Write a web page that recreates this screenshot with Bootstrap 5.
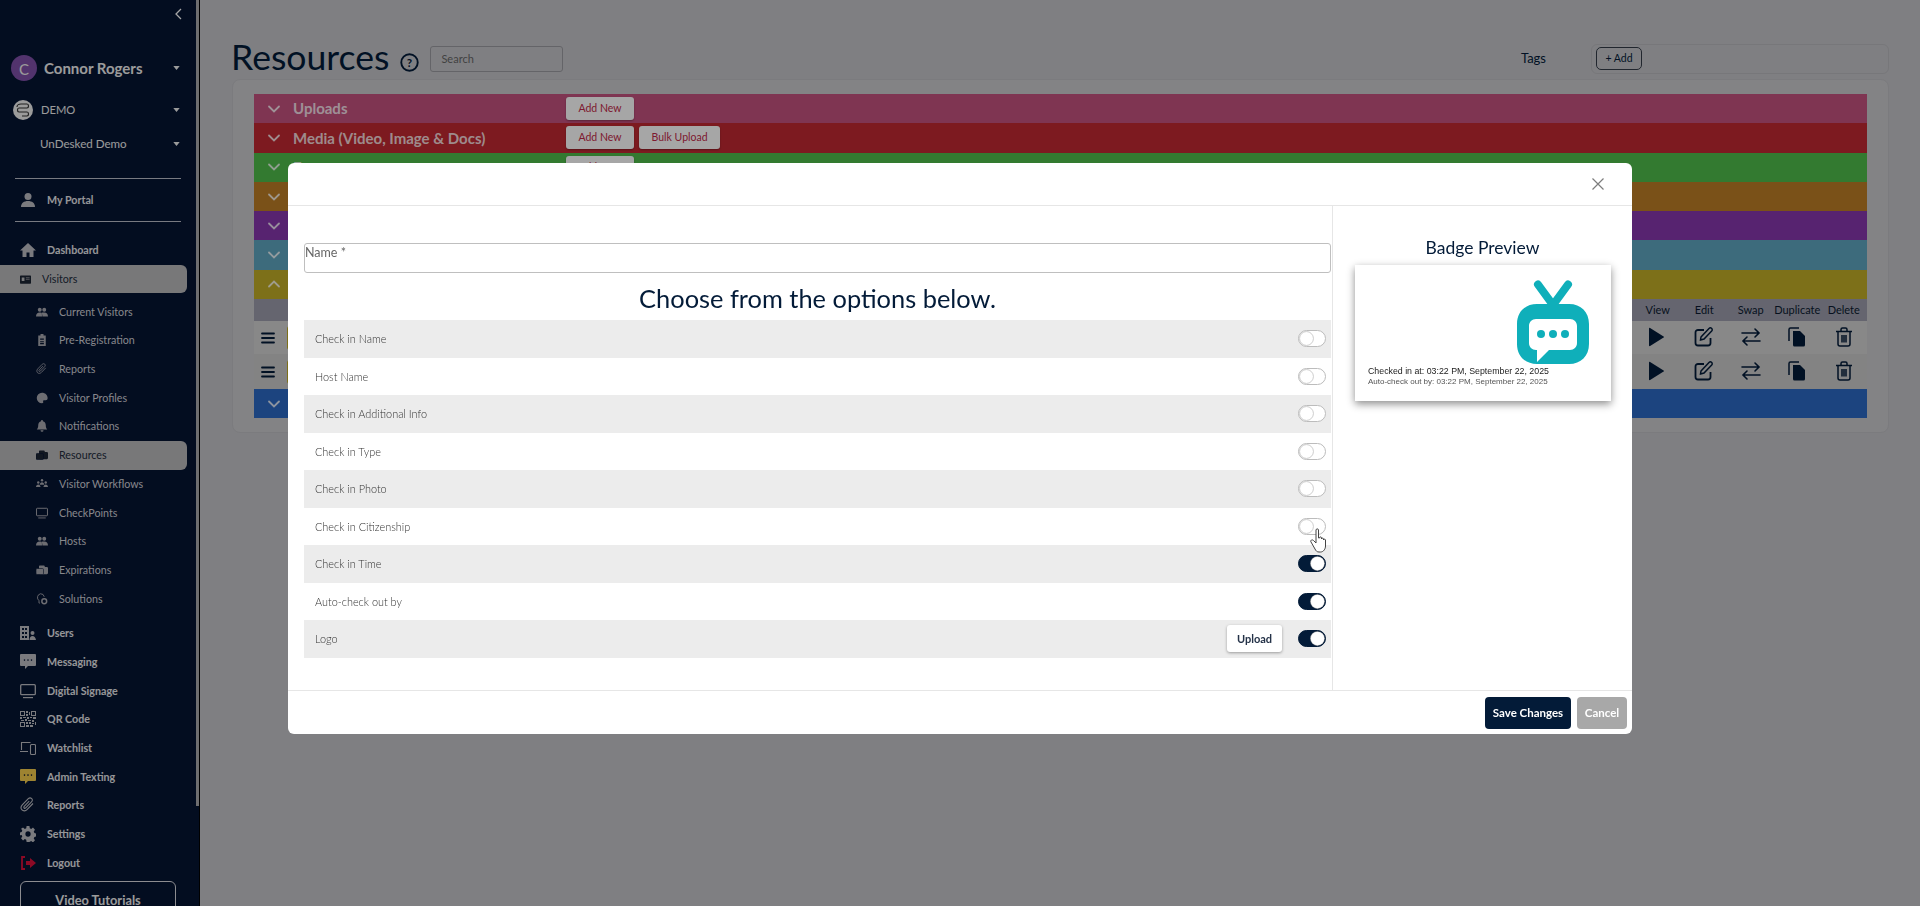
<!DOCTYPE html>
<html lang="en">
<head>
  <meta charset="UTF-8">
  <title>Resources</title>
  <link href="https://cdn.jsdelivr.net/npm/bootstrap@5.3.0/dist/css/bootstrap.min.css" rel="stylesheet">
  <style>
  body {
    background-color: #c4c4c8;
    font-family: Lato, "Open Sans", sans-serif;
    color: #031b38;
    overflow: hidden;
    height: 906px;
  }
  .modal-backdrop.show { opacity: .35; }

  /* sidebar */
  .side-col {
    width: 200px;
    height: 906px;
    flex: none;
    background-color: #051432;
    color: #eee;
    overflow: hidden;
    border-right: 1px solid #000;
    position: relative;
  }
  .side-thumb {
    position: absolute;
    right: 0;
    top: 0;
    width: 3px;
    height: 806px;
    background-color: #a9a9ad;
  }
  .side-top { height: 28px; padding-right: 17px; }
  .side-user { height: 28px; margin-top: 26px; padding: 0 19px 0 11px; font-size: 15px; font-weight: 700; gap: 7px; }
  .side-org { height: 28px; margin-top: 14px; padding: 0 19px 0 13px; font-size: 11.2px; }
  .side-site { height: 28px; margin-top: 6px; padding: 0 19px 0 40px; font-size: 11.6px; }
  .side-avatar {
    width: 26px;
    height: 26px;
    border-radius: 50%;
    background-color: #7f4fa8;
    font-size: 15px;
    font-weight: 400;
    line-height: 28px;
    text-align: center;
    flex: none;
  }
  .side-rule { height: 1px; margin: 0 0 0 15px; width: 166px; background-color: #b9bcc6; }
  .side-rule-first { margin-top: 20px; }
  .side-link {
    height: 28.7px;
    display: flex;
    align-items: center;
    color: #e6e6ea;
    font-size: 10.7px;
    font-weight: 700;
    text-decoration: none;
    white-space: nowrap;
  }
  .side-portal { height: 42px; }
  .side-link .ico { width: 27px; padding-left: 20px; flex: none; box-sizing: content-box; display: flex; color: #bcbcc2; }
  .side-link svg { width: 16px; height: 16px; flex: none; }
  .side-sub { font-weight: 400; color: #cfcfd6; }
  .side-sub .ico { padding-left: 36px; width: 23px; color: #a8a8b0; }
  .side-sub svg { width: 12px; height: 12px; }
  .side-active {
    width: 187px;
    background-color: #b8b8ba;
    color: #222b3a;
    border-radius: 0 6px 6px 0;
    font-weight: 400;
  }
  .side-link.side-active .ico { color: #1c2534; }
  .side-visitors .ico { width: 22px; }
  .side-visitors svg { width: 11px; height: 11px; }
  .side-nav { margin-top: 14px; }
  .side-subs { margin-top: 4px; }
  .side-rest { margin-top: 6px; }
  .side-video {
    width: 156px;
    height: 40px;
    margin: 4px 0 0 20px;
    border: 1px solid #d8d8de;
    border-radius: 6px;
    text-align: center;
    font-size: 12.8px;
    font-weight: 700;
    padding-top: 9px;
  }
  .side-link .txt-logout { color: #d8103a; }
  .side-link .txt-gold { color: #f2c94c; }

  /* page */
  .page-col { padding: 41px 31px 0 32px; min-width: 0; }
  .page-head { height: 36px; }
  .page-title { font-size: 35.6px; font-weight: 400; margin: 0 0 5px -1px; line-height: 36px; }
  .page-help { margin: 6px 0 0 11px; }
  .search-box {
    width: 133px;
    height: 26px;
    margin-left: 11px;
    background: transparent;
    border: 1px solid #9a9aa0;
    border-radius: 3px;
    padding-left: 10px;
    font-size: 11px;
    color: #666;
    line-height: 24px;
  }
  .tag-label { font-size: 13px; margin-right: 45px; }
  .tag-box {
    width: 298px;
    height: 30px;
    border: 1px solid #b7b7bc;
    border-radius: 6px;
    padding: 2px 4px;
  }
  .tag-add {
    width: 46px;
    height: 23px;
    border: 1px solid #333b48;
    border-radius: 5px;
    font-size: 10.5px;
    line-height: 21px;
    text-align: center;
  }
  .res-panel {
    margin-top: 2px;
    height: 354px;
    padding: 14px 21px 0;
    background-color: #c9c9cd;
    border: 1px solid #bdbdc2;
    border-radius: 8px;
  }
  .band { height: 29.3px; display: flex; align-items: center; color: rgba(255,255,255,.82); font-size: 15px; font-weight: 700; overflow: hidden; }
  .band-arrow { width: 39px; padding-left: 12px; flex: none; display: flex; }
  .band-name { width: 273px; flex: none; white-space: nowrap; }
  .band-btn {
    background-color: #fff;
    color: #c22a4a;
    font-size: 10.5px;
    font-weight: 400;
    border: 0;
    border-radius: 3px;
    height: 23px;
    line-height: 23px;
    padding: 0 12.500px;
    box-shadow: 0 1px 2px rgba(0,0,0,.3);
    margin-right: 5px;
  }
  .band-pink { background-color: #c4527f; }
  .band-red { background-color: #c02932; }
  .band-green { background-color: #4fbc4a; }
  .band-orange { background-color: #bc7d25; }
  .band-purple { background-color: #8636ad; }
  .band-teal { background-color: #5fa5bf; }
  .band-yellow { background-color: #c0ac27; }
  .band-blue { background-color: #2b69c4; }
  .res-head {
    height: 22px;
    background-color: #9c9cab;
    font-size: 11px;
    color: #0a1a30;
    justify-content: flex-end;
    display: flex;
    align-items: center;
  }
  .res-row {
    display: flex;
    align-items: center;
    justify-content: flex-end;
    background-color: #d2d2d2;
    position: relative;
  }
  .res-row-a { height: 33px; }
  .res-row-b { height: 35px; background-color: #c9c9c9; }
  .res-burger { margin-left: 7px; width: 14px; height: 14px; }
  .res-swatch { margin: 0 auto 0 12px; width: 90px; height: 24px; background-color: #c0ac27; border-radius: 3px; }
  .res-cell { width: 46.5px; text-align: center; flex: none; display: flex; justify-content: center; }
  .res-row .res-cell { margin-bottom: 2px; }
  .res-cell svg { width: 20px; height: 20px; }

  /* modal */
  .badge-dialog { width: 1344px; max-width: 1344px; margin: 163px 0 0 288px; }
  .badge-dialog .modal-content { height: 571px; border: 0; border-radius: 6px; }
  .badge-head { height: 43px; padding: 0 28px 0 0; border-bottom: 1px solid #e6e6e6; }
  .badge-close { width: 12px; height: 12px; color: #7d7d7d; }
  .badge-body { height: 484px; }
  .opt-col { width: 1045px; flex: none; padding: 37px 1px 0 16px; border-right: 1px solid #e6e6e6; }
  .name-field {
    height: 30px;
    border: 1px solid #bfbfbf;
    border-radius: 3px;
    font-size: 12.5px;
    color: #666;
    line-height: 18px;
  }
  .opt-title { font-size: 25.400px; font-weight: 400; text-align: center; margin: 8px 0 0; height: 39px; line-height: 35px; }
  .opt-row { height: 37.5px; display: flex; align-items: center; padding: 0 5px 0 11px; font-size: 10.9px; font-weight: 300; color: #333; }
  .opt-row > span { padding-top: 1px; }
  .opt-row:nth-child(odd) { background-color: #ececec; }
  .opt-switch { margin: 0; padding: 0; min-height: 0; height: 17px; display: flex; }
  .opt-switch .form-check-input {
    width: 28px;
    height: 17px;
    margin: 0;
    float: none;
    border: 1px solid #bcbcbc;
    box-shadow: none;
    background-color: #fff;
    background-image: url("data:image/svg+xml,%3csvg xmlns='http://www.w3.org/2000/svg' viewBox='-4 -4 8 8'%3e%3ccircle r='3.7' fill='%23fff' stroke='%23bdbdbd' stroke-width='.4'/%3e%3c/svg%3e");
  }
  .opt-switch .form-check-input:checked {
    background-color: #031b38;
    border-color: #031b38;
    background-image: url("data:image/svg+xml,%3csvg xmlns='http://www.w3.org/2000/svg' viewBox='-4 -4 8 8'%3e%3ccircle r='3.8' fill='%23fff' stroke='%23777' stroke-width='.2'/%3e%3c/svg%3e");
  }
  .upload-btn {
    width: 55px;
    height: 27px;
    margin-right: 16px;
    background-color: #fff;
    border: 0;
    border-radius: 3px;
    font-size: 11px;
    font-weight: 700;
    color: #243248;
    box-shadow: 0 1px 3px rgba(0,0,0,.35);
    padding: 0;
  }
  .preview-col { flex: 1; padding-top: 28px; }
  .preview-title { font-size: 17.500px; font-weight: 400; text-align: center; height: 31px; line-height: 27px; margin: 0; }
  .preview-card {
    width: 256px;
    height: 136px;
    margin-left: 22px;
    background-color: #fff;
    box-shadow: 0 3px 8px rgba(0,0,0,.45);
    padding: 15px 22px 0 13px;
    font-family: "Liberation Sans", Arial, sans-serif;
    color: #222;
    line-height: 1.15;
  }
  .preview-logo { width: 72px; height: 84px; display: block; }
  .preview-in { font-size: 8.800px; margin-top: 2px; white-space: nowrap; }
  .preview-out { font-size: 8px; color: #555; margin-top: 1px; white-space: nowrap; }
  .badge-foot { height: 44px; padding: 0 5px 0 0; border-top: 1px solid #e6e6e6; gap: 6px; }
  .save-btn, .cancel-btn {
    height: 32px;
    border: 0;
    border-radius: 4px;
    font-size: 11.500px;
    font-weight: 700;
    color: #fff;
    padding: 0;
  }
  .save-btn { width: 86px; background-color: #031b38; }
  .cancel-btn { width: 50px; background-color: #a8a8a8; }
  .hand-cursor { position: fixed; left: 1310px; top: 528px; width: 18px; height: 25px; z-index: 1060; }
  </style>
</head>
<body>
  <svg width="0" height="0" class="d-block position-absolute">
    <defs>
      <symbol id="i-caret" viewBox="0 0 8 5"><path d="M0 0h8L4 5z" fill="currentColor"/></symbol>
      <symbol id="i-chev" viewBox="0 0 16 16"><path d="M3 5.500l5 5 5-5" fill="none" stroke="currentColor" stroke-width="1.800" stroke-linecap="round"/></symbol>
      <symbol id="i-chevup" viewBox="0 0 16 16"><path d="M3 10.500l5-5 5 5" fill="none" stroke="currentColor" stroke-width="1.800" stroke-linecap="round"/></symbol>
      <symbol id="i-person" viewBox="0 0 16 16"><circle cx="8" cy="4.500" r="3.500" fill="currentColor"/><path d="M1 15c0-4 3-6 7-6s7 2 7 6z" fill="currentColor"/></symbol>
      <symbol id="i-home" viewBox="0 0 16 16"><path d="M8 1L0 8.500h2.500V15h4v-4.500h3V15h4V8.500H16z" fill="currentColor"/></symbol>
      <symbol id="i-idcard" viewBox="0 0 16 16"><path fill-rule="evenodd" d="M1 2h14a1 1 0 0 1 1 1v10a1 1 0 0 1-1 1H1a1 1 0 0 1-1-1V3a1 1 0 0 1 1-1zm1.500 3v5h4V5zm6 0v1H14V5zm0 2.500v1H14v-1z" fill="currentColor"/></symbol>
      <symbol id="i-people" viewBox="0 0 16 16"><circle cx="5" cy="5" r="2.600" fill="currentColor"/><circle cx="11" cy="5" r="2.600" fill="currentColor"/><path d="M0 14c0-3.500 2-5.500 5-5.500S8 10 8 14zM8.500 14c0-2-.3-3.800-1.300-5 1-.4 2.500-.5 3.800-.5 3 0 5 2 5 5.500z" fill="currentColor"/></symbol>
      <symbol id="i-clip" viewBox="0 0 16 16"><path d="M13 6.500l-6 6.200c-1.500 1.500-3.800 1.500-5 .2s-1.200-3.400.3-5l6-6.200c1-1 2.500-1 3.400-.1s.8 2.300-.2 3.300l-5.800 6c-.5.500-1.200.5-1.600.1s-.4-1.100.1-1.600l5-5.200" fill="none" stroke="currentColor" stroke-width="1.100"/></symbol>
      <symbol id="i-clipboard" viewBox="0 0 16 16"><path fill-rule="evenodd" d="M6 0h4v2h3v14H3V2h3zM5.500 6v1.500h5V6zm0 3.500V11h5V9.500zm0 2.500v1.500h5V12z" fill="currentColor"/></symbol>
      <symbol id="i-profile" viewBox="0 0 16 16"><path d="M8 1a7 7 0 1 0 0 14c1.500 0 2-1 1.500-2.200-.4-1 .3-1.800 1.500-1.800h2c1.500 0 2.500-1.200 2.500-3C15.500 4 12 1 8 1z" fill="currentColor"/></symbol>
      <symbol id="i-bell" viewBox="0 0 16 16"><path d="M8 0a1.200 1.200 0 0 0-1.200 1.500C4.500 2 3 4 3 6.500c0 3-.8 4.800-2 6h14c-1.200-1.200-2-3-2-6 0-2.500-1.500-4.500-3.800-5A1.200 1.200 0 0 0 8 0zM6 13.500a2 2 0 0 0 4 0z" fill="currentColor"/></symbol>
      <symbol id="i-files" viewBox="0 0 16 16"><path d="M5 2h6l1 2h2.500A1.500 1.500 0 0 1 16 5.500V12a1.500 1.500 0 0 1-1.500 1.500h-9A1.500 1.500 0 0 1 4 12V3a1 1 0 0 1 1-1z" fill="currentColor"/><rect x="0" y="6" width="10" height="8" rx="1.500" fill="currentColor" stroke="#051432" stroke-width=".8"/></symbol>
      <symbol id="i-flow" viewBox="0 0 16 16"><circle cx="3" cy="6" r="1.600" fill="currentColor"/><circle cx="8" cy="3" r="1.600" fill="currentColor"/><circle cx="13" cy="6" r="1.600" fill="currentColor"/><path d="M0 12c0-2 1.500-3.500 3-3.500S6 10 6 12zM5 9c0-2 1.500-3.500 3-3.500S11 7 11 9zM10 12c0-2 1.500-3.500 3-3.500S16 10 16 12z" fill="currentColor"/></symbol>
      <symbol id="i-monitor" viewBox="0 0 16 16"><rect x=".7" y="1.700" width="14.600" height="10" rx="1" fill="none" stroke="currentColor" stroke-width="1.300"/><path d="M3 14h10v1.200H3z" fill="currentColor"/></symbol>
      <symbol id="i-bulb" viewBox="0 0 16 16"><path d="M5 13.500H4v-3.300A5.200 5.200 0 0 1 6 1a5 5 0 0 1 5 4" fill="none" stroke="currentColor" stroke-width="1.200"/><circle cx="11" cy="11" r="3.200" fill="none" stroke="currentColor" stroke-width="2"/></symbol>
      <symbol id="i-users" viewBox="0 0 16 16"><path fill-rule="evenodd" d="M0 1h9v14H0zm2 2v2h2V3zm3 0v2h2V3zM2 7v2h2V7zm3 0v2h2V7zm-3 4v2h2v-2zm3 0v2h2v-2z" fill="currentColor"/><circle cx="12.500" cy="8" r="2" fill="currentColor"/><path d="M9.500 15c0-2.500 1.300-4 3-4s3 1.500 3.500 4z" fill="currentColor"/></symbol>
      <symbol id="i-chat" viewBox="0 0 16 16"><path fill-rule="evenodd" d="M1 0h14a1 1 0 0 1 1 1v10a1 1 0 0 1-1 1H8l-3 3v-3H1a1 1 0 0 1-1-1V1a1 1 0 0 1 1-1zm3.500 5.300a.8.8 0 1 0 0 1.600.8.800 0 0 0 0-1.600zm3.500 0a.8.8 0 1 0 0 1.600.8.800 0 0 0 0-1.600zm3.500 0a.8.8 0 1 0 0 1.600.8.800 0 0 0 0-1.600z" fill="currentColor"/></symbol>
      <symbol id="i-qr" viewBox="0 0 16 16"><path fill="currentColor" d="M0 0h5v5H0zM11 0h5v5h-5zM0 11h5v5H0zM1 1v3h3V1zM12 1v3h3V1zM1 12v3h3v-3z" fill-rule="evenodd"/><path fill="currentColor" d="M6 0h2v2H6zM9 1h1v3H9zM6 3h2v2H6zM0 6h2v2H0zM3 6h3v1H3zM7 6h2v2H7zM10 6h2v1h-2zM13 6h3v2h-3zM1 9h3v1H1zM5 8h2v2H5zM8 9h3v1H8zM12 9h2v2h-2zM6 11h2v2H6zM9 11h2v2H9zM12 12h2v1h-2zM15 11h1v3h-1zM6 14h3v2H6zM10 14h3v2h-3z"/></symbol>
      <symbol id="i-devices" viewBox="0 0 16 16"><path d="M1.500 10V2.500h9M0 11.500h8" fill="none" stroke="currentColor" stroke-width="1.100"/><rect x="10.500" y="4.500" width="5" height="10" rx="1" fill="none" stroke="currentColor" stroke-width="1.100"/></symbol>
      <symbol id="i-gear" viewBox="0 0 16 16"><path fill-rule="evenodd" d="M6.500 0h3l.4 2.200 1.500.7 1.900-1.300 2.100 2.100-1.300 1.900.7 1.500 2.200.4v3l-2.200.4-.7 1.500 1.300 1.900-2.100 2.100-1.900-1.300-1.500.7L9.500 16h-3l-.4-2.200-1.500-.7-1.900 1.300-2.100-2.100 1.300-1.900-.7-1.500L-1 9.500v-3l2.200-.4.700-1.500L.6 2.700 2.700 1.600l1.900 1.300 1.500-.7zM8 5.200a2.800 2.800 0 1 0 0 5.600 2.800 2.800 0 0 0 0-5.600z" fill="currentColor" transform="translate(.5 0) scale(.94 1)"/></symbol>
      <symbol id="i-logout" viewBox="0 0 16 16"><path d="M5 2H2v12h3" fill="none" stroke="currentColor" stroke-width="1.800"/><path d="M6 6h4V3l6 5-6 5v-3H6z" fill="currentColor"/></symbol>
      <symbol id="i-play" viewBox="0 0 20 20"><path d="M1 1.500c0-.6.600-.9 1.100-.6l13.500 8.500c.5.300.5.900 0 1.200L2.100 19.100c-.5.300-1.100 0-1.100-.6z" fill="currentColor"/></symbol>
      <symbol id="i-edit" viewBox="0 0 20 20"><path d="M10 3H4a2.500 2.500 0 0 0-2.500 2.500V16A2.500 2.500 0 0 0 4 18.500h10a2.500 2.500 0 0 0 2.500-2.500v-5" fill="none" stroke="currentColor" stroke-width="1.800"/><path d="M7 10L15 1.500c.7-.7 2-.7 2.700 0s.7 1.800 0 2.500L10 12l-3.500 1z" fill="none" stroke="currentColor" stroke-width="1.500"/></symbol>
      <symbol id="i-swap" viewBox="0 0 20 20"><path d="M1 6h17M14 2l4 4-4 4M19 14H2M6 10l-4 4 4 4" fill="none" stroke="currentColor" stroke-width="1.600" stroke-linecap="round"/></symbol>
      <symbol id="i-dup" viewBox="0 0 20 20"><path d="M2 14V2.500A1.500 1.500 0 0 1 3.500 1H12" fill="none" stroke="currentColor" stroke-width="1.500"/><path d="M6 4h7l5 5v9a1.500 1.500 0 0 1-1.500 1.500h-9A1.500 1.500 0 0 1 6 18z" fill="currentColor"/></symbol>
      <symbol id="i-trash" viewBox="0 0 20 20"><path d="M2 4.500h16M7 4.500V2.500A1.500 1.500 0 0 1 8.500 1h3A1.500 1.500 0 0 1 13 2.500v2M4 4.500V17a2 2 0 0 0 2 2h8a2 2 0 0 0 2-2V4.500M8 8v7.500M10 8v7.500M12 8v7.500" fill="none" stroke="currentColor" stroke-width="1.500"/></symbol>
      <symbol id="i-burger" viewBox="0 0 14 14"><path d="M1 2.500h12M1 7h12M1 11.500h12" stroke="currentColor" stroke-width="1.800" stroke-linecap="round"/></symbol>
    </defs>
  </svg>

  <div class="d-flex">
    <aside class="side-col">
      <div class="side-thumb"></div>
      <div class="side-top d-flex align-items-center justify-content-end">
        <svg width="7" height="12" viewBox="0 0 7 12"><path d="M6 1L1 6l5 5" fill="none" stroke="#fff" stroke-width="1.300"/></svg>
      </div>
      <div class="side-user d-flex align-items-center">
        <span class="side-avatar">C</span>
        <span class="flex-grow-1">Connor Rogers</span>
        <svg width="7" height="4"><use href="#i-caret"/></svg>
      </div>
      <div class="side-org d-flex align-items-center">
        <svg width="20" height="20" viewBox="0 0 20 20" class="me-2 flex-none">
          <circle cx="10" cy="10" r="10" fill="#eee"/>
          <path d="M4 7c0-2 2-3 4-3h6c2 0 2 4 0 4H6c-2 0-2 4 0 4h8c2 0 2 4 0 4H9" fill="none" stroke="#333" stroke-width="1.200"/>
        </svg>
        <span class="flex-grow-1">DEMO</span>
        <svg width="7" height="4"><use href="#i-caret"/></svg>
      </div>
      <div class="side-site d-flex align-items-center">
        <span class="flex-grow-1">UnDesked Demo</span>
        <svg width="7" height="4"><use href="#i-caret"/></svg>
      </div>
      <div class="side-rule side-rule-first"></div>
      <div class="side-link side-portal">
        <span class="ico"><svg><use href="#i-person"/></svg></span>My Portal
      </div>
      <div class="side-rule"></div>

      <nav class="side-nav">
        <a class="side-link"><span class="ico"><svg><use href="#i-home"/></svg></span>Dashboard</a>
        <a class="side-link side-active side-visitors"><span class="ico"><svg><use href="#i-idcard"/></svg></span>Visitors</a>
        <div class="side-subs">
          <a class="side-link side-sub"><span class="ico"><svg><use href="#i-people"/></svg></span>Current Visitors</a>
          <a class="side-link side-sub"><span class="ico"><svg><use href="#i-clipboard"/></svg></span>Pre-Registration</a>
          <a class="side-link side-sub"><span class="ico"><svg><use href="#i-clip"/></svg></span>Reports</a>
          <a class="side-link side-sub"><span class="ico"><svg><use href="#i-profile"/></svg></span>Visitor Profiles</a>
          <a class="side-link side-sub"><span class="ico"><svg><use href="#i-bell"/></svg></span>Notifications</a>
          <a class="side-link side-sub side-active"><span class="ico"><svg><use href="#i-files"/></svg></span>Resources</a>
          <a class="side-link side-sub"><span class="ico"><svg><use href="#i-flow"/></svg></span>Visitor Workflows</a>
          <a class="side-link side-sub"><span class="ico"><svg><use href="#i-monitor"/></svg></span>CheckPoints</a>
          <a class="side-link side-sub"><span class="ico"><svg><use href="#i-people"/></svg></span>Hosts</a>
          <a class="side-link side-sub"><span class="ico"><svg><use href="#i-files"/></svg></span>Expirations</a>
          <a class="side-link side-sub"><span class="ico"><svg><use href="#i-bulb"/></svg></span>Solutions</a>
        </div>
        <div class="side-rest">
          <a class="side-link"><span class="ico"><svg><use href="#i-users"/></svg></span>Users</a>
          <a class="side-link"><span class="ico"><svg><use href="#i-chat"/></svg></span>Messaging</a>
          <a class="side-link"><span class="ico"><svg><use href="#i-monitor"/></svg></span>Digital Signage</a>
          <a class="side-link"><span class="ico"><svg><use href="#i-qr"/></svg></span>QR Code</a>
          <a class="side-link"><span class="ico"><svg><use href="#i-devices"/></svg></span>Watchlist</a>
          <a class="side-link"><span class="ico txt-gold"><svg><use href="#i-chat"/></svg></span>Admin Texting</a>
          <a class="side-link"><span class="ico"><svg><use href="#i-clip"/></svg></span>Reports</a>
          <a class="side-link"><span class="ico"><svg><use href="#i-gear"/></svg></span>Settings</a>
          <a class="side-link"><span class="ico txt-logout"><svg><use href="#i-logout"/></svg></span>Logout</a>
        </div>
      </nav>
      <div class="side-video">Video Tutorials</div>
    </aside>

    <main class="page-col flex-grow-1">
      <div class="page-head d-flex align-items-center">
        <h1 class="page-title">Resources</h1>
        <svg width="19" height="19" viewBox="0 0 18 18" class="page-help">
          <circle cx="9" cy="9" r="7.800" fill="none" stroke="#031b38" stroke-width="1.800"/>
          <text x="9" y="13" text-anchor="middle" font-size="11" font-weight="700" fill="#031b38" font-family="Lato, sans-serif">?</text>
        </svg>
        <div class="search-box">Search</div>
        <span class="tag-label ms-auto">Tags</span>
        <div class="tag-box"><div class="tag-add">+ Add</div></div>
      </div>

      <div class="res-panel">
        <div class="band band-pink"><span class="band-arrow"><svg width="16" height="16"><use href="#i-chev"/></svg></span><span class="band-name">Uploads</span><button class="band-btn">Add New</button></div>
        <div class="band band-red"><span class="band-arrow"><svg width="16" height="16"><use href="#i-chev"/></svg></span><span class="band-name">Media (Video, Image &amp; Docs)</span><button class="band-btn">Add New</button><button class="band-btn">Bulk Upload</button></div>
        <div class="band band-green"><span class="band-arrow"><svg width="16" height="16"><use href="#i-chev"/></svg></span><span class="band-name">Forms</span><button class="band-btn">Add New</button></div>
        <div class="band band-orange"><span class="band-arrow"><svg width="16" height="16"><use href="#i-chev"/></svg></span></div>
        <div class="band band-purple"><span class="band-arrow"><svg width="16" height="16"><use href="#i-chev"/></svg></span></div>
        <div class="band band-teal"><span class="band-arrow"><svg width="16" height="16"><use href="#i-chev"/></svg></span></div>
        <div class="band band-yellow"><span class="band-arrow"><svg width="16" height="16"><use href="#i-chevup"/></svg></span></div>
        <div class="res-head">
          <span class="res-cell">View</span><span class="res-cell">Edit</span><span class="res-cell">Swap</span><span class="res-cell">Duplicate</span><span class="res-cell">Delete</span>
        </div>
        <div class="res-row res-row-a">
          <svg class="res-burger"><use href="#i-burger"/></svg>
          <span class="res-swatch"></span>
          <span class="res-cell"><svg><use href="#i-play"/></svg></span><span class="res-cell"><svg><use href="#i-edit"/></svg></span><span class="res-cell"><svg><use href="#i-swap"/></svg></span><span class="res-cell"><svg><use href="#i-dup"/></svg></span><span class="res-cell"><svg><use href="#i-trash"/></svg></span>
        </div>
        <div class="res-row res-row-b">
          <svg class="res-burger"><use href="#i-burger"/></svg>
          <span class="res-swatch"></span>
          <span class="res-cell"><svg><use href="#i-play"/></svg></span><span class="res-cell"><svg><use href="#i-edit"/></svg></span><span class="res-cell"><svg><use href="#i-swap"/></svg></span><span class="res-cell"><svg><use href="#i-dup"/></svg></span><span class="res-cell"><svg><use href="#i-trash"/></svg></span>
        </div>
        <div class="band band-blue"><span class="band-arrow"><svg width="16" height="16"><use href="#i-chev"/></svg></span></div>
      </div>
    </main>
  </div>

  <div class="modal-backdrop show"></div>
  <div class="modal d-block">
    <div class="modal-dialog badge-dialog">
      <div class="modal-content">
        <div class="badge-head d-flex align-items-center justify-content-end">
          <svg class="badge-close" viewBox="0 0 12 12"><path d="M.5.5l11 11M11.500.5l-11 11" stroke="currentColor" stroke-width="1.200"/></svg>
        </div>
        <div class="badge-body d-flex">
          <div class="opt-col">
            <div class="name-field">Name *</div>
            <h2 class="opt-title">Choose from the options below.</h2>
            <div>
              <div class="opt-row"><span class="me-auto">Check in Name</span><div class="form-check form-switch opt-switch"><input class="form-check-input" type="checkbox"></div></div>
              <div class="opt-row"><span class="me-auto">Host Name</span><div class="form-check form-switch opt-switch"><input class="form-check-input" type="checkbox"></div></div>
              <div class="opt-row"><span class="me-auto">Check in Additional Info</span><div class="form-check form-switch opt-switch"><input class="form-check-input" type="checkbox"></div></div>
              <div class="opt-row"><span class="me-auto">Check in Type</span><div class="form-check form-switch opt-switch"><input class="form-check-input" type="checkbox"></div></div>
              <div class="opt-row"><span class="me-auto">Check in Photo</span><div class="form-check form-switch opt-switch"><input class="form-check-input" type="checkbox"></div></div>
              <div class="opt-row"><span class="me-auto">Check in Citizenship</span><div class="form-check form-switch opt-switch"><input class="form-check-input" type="checkbox"></div></div>
              <div class="opt-row"><span class="me-auto">Check in Time</span><div class="form-check form-switch opt-switch"><input class="form-check-input" type="checkbox" checked></div></div>
              <div class="opt-row"><span class="me-auto">Auto-check out by</span><div class="form-check form-switch opt-switch"><input class="form-check-input" type="checkbox" checked></div></div>
              <div class="opt-row"><span class="me-auto">Logo</span><button class="upload-btn">Upload</button><div class="form-check form-switch opt-switch"><input class="form-check-input" type="checkbox" checked></div></div>
            </div>
          </div>
          <div class="preview-col">
            <h3 class="preview-title">Badge Preview</h3>
            <div class="preview-card">
              <div class="d-flex justify-content-end">
                <svg class="preview-logo" viewBox="0 0 72 84">
                  <path d="M21 4.500L36 25 51 4.500" fill="none" stroke="#0fafba" stroke-width="8" stroke-linecap="round"/>
                  <path fill-rule="evenodd" fill="#0fafba" d="M20 24h32c12 0 20 8 20 20v20c0 12-8 20-20 20H20C8 84 0 76 0 64V44c0-12 8-20 20-20zm-1 15c-4 0-7 3-7 7v17c0 4 3 7 7 7h1v12l12-12h21c4 0 7-3 7-7V46c0-4-3-7-7-7z"/>
                  <circle cx="24" cy="54" r="4" fill="#0fafba"/><circle cx="36" cy="54" r="4" fill="#0fafba"/><circle cx="48" cy="54" r="4" fill="#0fafba"/>
                </svg>
              </div>
              <div class="preview-in">Checked in at: 03:22 PM, September 22, 2025</div>
              <div class="preview-out">Auto-check out by: 03:22 PM, September 22, 2025</div>
            </div>
          </div>
        </div>
        <div class="badge-foot d-flex align-items-center justify-content-end">
          <button class="save-btn">Save Changes</button>
          <button class="cancel-btn">Cancel</button>
        </div>
      </div>
    </div>
  </div>

  <svg class="hand-cursor" viewBox="0 0 18 25">
    <path d="M6 2c0-1.500 2.500-1.500 2.500 0v8l1 0c0-1.500 2-1.500 2 0v1c0-1.200 2-1.200 2 0v1c0-1.100 2-1.100 2 0v6c0 3-2 6-5 6H9c-2 0-3-1-4-3L1 14c-1-1.500 1-3 2.500-1.500L6 15z" fill="#fff" stroke="#444" stroke-width="1"/>
  </svg>
</body>
</html>
